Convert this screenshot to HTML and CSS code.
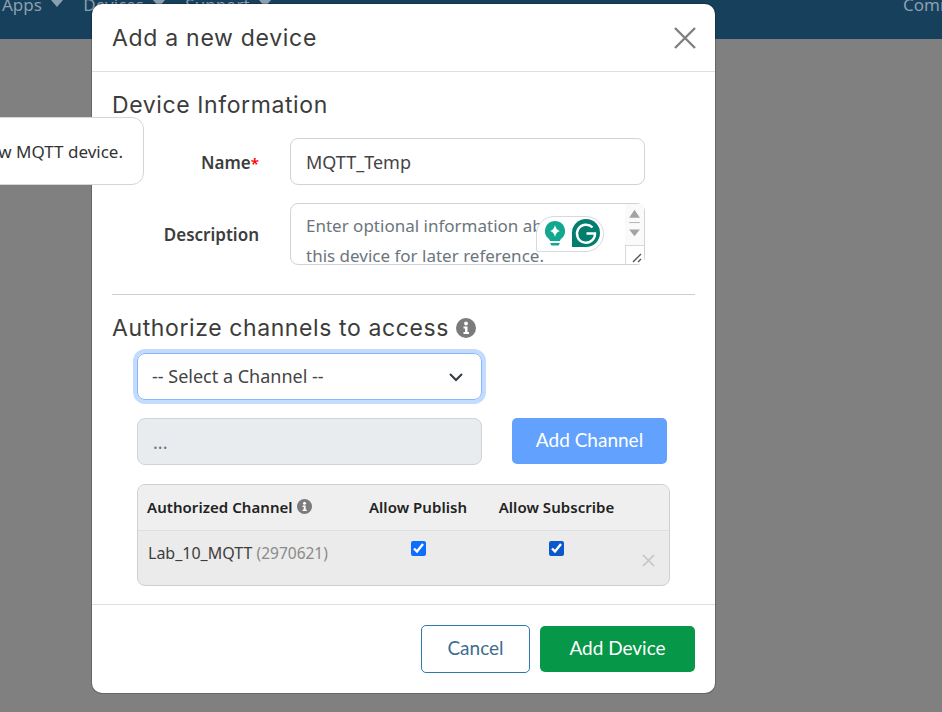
FILE: index.html
```html
<!DOCTYPE html>
<html lang="en">
<head>
    <meta charset="UTF-8">
    <title>Add a new device</title>
    <link rel="stylesheet" href="styles.css">
</head>
<body>
    <nav class="navbar">
        <span class="nav-item">Apps <i class="caret"></i></span>
        <span class="nav-item">Devices <i class="caret"></i></span>
        <span class="nav-item">Support <i class="caret"></i></span>
        <span class="nav-item nav-right">Commercial</span>
    </nav>

    <div class="popover">Add a new MQTT device.</div>

    <div class="modal">
        <div class="modal-header">
            <h4>Add a new device</h4>
            <svg class="close" width="24" height="24" viewBox="0 0 24 24"><path d="M2 2 L22 22 M22 2 L2 22" stroke="#808080" stroke-width="2.4" fill="none"/></svg>
        </div>

        <div class="modal-body">
            <h5 class="first">Device Information</h5>

            <div class="form-row name-row">
                <label>Name<span class="req">*</span></label>
                <input class="form-control" type="text" value="MQTT_Temp">
            </div>

            <div class="form-row desc-row">
                <label>Description</label>
                <div class="desc-box">
                    <textarea class="form-control" placeholder="Enter optional information about this device for later reference."></textarea>
                    <div class="scrollbar">
                        <svg width="19" height="42" viewBox="0 0 19 42"><path d="M4 14 L9.5 6 L15 14 Z" fill="#a3a3a3"/><path d="M4 19 H15" stroke="#b5b5b5"/><path d="M4 26 L15 26 L9.5 33 Z" fill="#a3a3a3"/></svg>
                        <div class="resizer">
                            <svg width="19" height="19" viewBox="0 0 19 19"><path d="M7 16 L15 8 M12 16 L15 13" stroke="#555" stroke-width="1.4"/></svg>
                        </div>
                    </div>
                    <div class="grammarly">
                        <svg width="24" height="26" viewBox="0 0 24 26"><path d="M12 1 A10 10 0 0 1 18 19 Q17 20 17 21 H7 Q7 20 6 19 A10 10 0 0 1 12 1 Z" fill="#11a88f"/><path d="M12 5 Q13 10 17 11 Q13 12 12 17 Q11 12 7 11 Q11 10 12 5 Z" fill="#fff"/><path d="M7 23 H17 L15.5 25.500 H8.500 Z" fill="#11a88f"/></svg>
                        <svg width="30" height="30" viewBox="0 0 30 30"><path d="M15 1 A14 14 0 0 1 15 29 H1 V15 A14 14 0 0 1 15 1 Z" fill="#027e6f"/><path d="M21.500 9.500 A9 9 0 1 0 24 15.500 H15.500" stroke="#fff" stroke-width="2.400" fill="none"/></svg>
                    </div>
                </div>
            </div>

            <hr class="divider">

            <h5 class="channels-title">Authorize channels to access
                <svg class="info" width="20" height="20" viewBox="0 0 20 20"><circle cx="10" cy="10" r="10" fill="#7b7b7b"/><circle cx="10" cy="5.500" r="1.900" fill="#fff"/><path d="M7.500 8.500 H11.500 V14 H13 V16 H7.500 V14 H9 V10.500 H7.500 Z" fill="#fff"/></svg>
            </h5>

            <div class="channels">
                <div class="select-box">
                    <span>-- Select a Channel --</span>
                    <svg width="16" height="16" viewBox="0 0 16 16"><path d="M2 5 L8 11 L14 5" stroke="#343a40" stroke-width="2" fill="none"/></svg>
                </div>

                <div class="add-row">
                    <input class="form-control disabled" type="text" value="..." disabled>
                    <button class="btn btn-blue">Add Channel</button>
                </div>

                <div class="table-wrap">
                    <table>
                        <thead>
                            <tr>
                                <th class="col-name">Authorized Channel
                                    <svg class="info-small" width="15" height="15" viewBox="0 0 20 20"><circle cx="10" cy="10" r="10" fill="#7b7b7b"/><circle cx="10" cy="5.500" r="2" fill="#fff"/><path d="M7.500 8.500 H11.500 V14 H13 V16 H7.500 V14 H9 V10.500 H7.500 Z" fill="#fff"/></svg>
                                </th>
                                <th class="col-pub">Allow Publish</th>
                                <th class="col-sub">Allow Subscribe</th>
                                <th class="col-del"></th>
                            </tr>
                        </thead>
                        <tbody>
                            <tr>
                                <td class="col-name">Lab_10_MQTT <span class="muted">(2970621)</span></td>
                                <td class="col-pub"><input type="checkbox" checked></td>
                                <td class="col-sub"><input class="focused" type="checkbox" checked></td>
                                <td class="col-del">
                                    <svg width="13" height="13" viewBox="0 0 13 13"><path d="M1 1 L12 12 M12 1 L1 12" stroke="#c4c4c4" stroke-width="1.600"/></svg>
                                </td>
                            </tr>
                        </tbody>
                    </table>
                </div>
            </div>
        </div>

        <div class="modal-footer">
            <button class="btn btn-cancel">Cancel</button>
            <button class="btn btn-green">Add Device</button>
        </div>
    </div>
</body>
</html>
```

FILE: styles.css
```css
* {
    box-sizing: border-box;
}

html, body {
    height: 100%;
}

body {
    margin: 0;
    background-color: #808080;
    font-family: "Noto Sans", sans-serif;
    color: #333;
    overflow: hidden;
    position: relative;
}

.navbar {
    background-color: #17405c;
    height: 39px;
    display: flex;
    align-items: flex-start;
    gap: 20px;
    padding-left: 2px;
    overflow: hidden;
}

.nav-item {
    margin-top: -7px;
    font-size: 17px;
    line-height: 24px;
    color: #8b9fae;
    white-space: nowrap;
}

.nav-right {
    margin-left: 612px;
}

.caret {
    display: inline-block;
    width: 0;
    height: 0;
    border-left: 6px solid transparent;
    border-right: 6px solid transparent;
    border-top: 7px solid #8b9fae;
    margin-left: 5px;
    vertical-align: 4px;
}

.modal {
    position: absolute;
    left: 92px;
    top: 4px;
    width: 623px;
    height: 689px;
    background-color: #fff;
    border-radius: 10px;
    box-shadow: 0 0 0 1px rgba(0, 0, 0, 0.2);
    display: flex;
    flex-direction: column;
}

.modal-header {
    height: 68px;
    flex: none;
    border-bottom: 1px solid #dfdfdf;
    display: flex;
    align-items: center;
    justify-content: space-between;
    padding: 0 18px 0 20px;
}

h4, h5 {
    margin: 0;
    font-family: Inter, sans-serif;
    font-weight: 400;
    color: #3c3c3c;
}

h4 {
    font-size: 23px;
    letter-spacing: 0.7px;
}

h5 {
    font-size: 23px;
    letter-spacing: 0.6px;
    line-height: 30px;
}

.modal-body {
    flex: 1;
    padding: 18px 20px 0;
}

.form-row {
    display: flex;
    align-items: center;
}

.form-row label {
    width: 147px;
    margin-right: 31px;
    text-align: right;
    font-size: 17px;
    font-weight: 600;
    color: #3d3d3d;
}

.req {
    color: #f00;
    font-size: 15px;
}

.form-control {
    border: 1px solid #ced4da;
    border-radius: 8px;
    font-family: "Noto Sans", sans-serif;
    font-size: 18px;
    color: #444;
    background-color: #fff;
    outline: none;
}

.name-row {
    margin-top: 18px;
}

.name-row label {
    padding-top: 2px;
}

.name-row .form-control {
    width: 355px;
    height: 47px;
    padding: 0 15px 0 15px;
}

.desc-row {
    margin-top: 18px;
}

.desc-box {
    position: relative;
    width: 355px;
    height: 62px;
}

.desc-box textarea {
    display: block;
    width: 100%;
    height: 100%;
    padding: 7px 60px 0 15px;
    font-size: 17px;
    line-height: 30px;
    resize: none;
    overflow: hidden;
}

.desc-box textarea::placeholder {
    color: #6c757d;
    opacity: 1;
}

.scrollbar {
    position: absolute;
    top: 1px;
    right: 1px;
    bottom: 1px;
    width: 19px;
    background-color: #fafafa;
    display: flex;
    flex-direction: column;
    justify-content: space-between;
}

.resizer {
    height: 19px;
    border-top: 1px solid #d8d8d8;
    border-left: 1px solid #d8d8d8;
    background-color: #fff;
}

.grammarly {
    position: absolute;
    left: 246px;
    top: 13px;
    width: 68px;
    height: 36px;
    background-color: #fff;
    border: 1px solid #d5d9e2;
    border-radius: 18px 18px 18px 2px;
    display: flex;
    align-items: center;
    gap: 4px;
    padding: 0 0 2px 6px;
}

.divider {
    border: 0;
    border-top: 1px solid #cfcfcf;
    margin: 29px 0 0;
}

.channels-title {
    margin-top: 18px;
    display: flex;
    align-items: center;
    gap: 7px;
}

.channels {
    padding-left: 25px;
    margin-top: 10px;
}

.select-box {
    width: 345px;
    height: 47px;
    border: 1px solid #86b7fe;
    border-radius: 8px;
    box-shadow: 0 0 0 4px #c2dbfe;
    display: flex;
    align-items: center;
    justify-content: space-between;
    padding: 0 17px 2px 14px;
    font-size: 18px;
    color: #444;
}

.select-box svg {
    margin-top: 2px;
}

.add-row {
    display: flex;
    align-items: flex-start;
    margin-top: 18px;
}

.form-control.disabled {
    width: 345px;
    height: 47px;
    padding: 0 15px;
    background-color: #e9ecef;
    color: #6c757d;
}

.btn {
    border: none;
    border-radius: 5px;
    font-family: Lato, sans-serif;
    font-size: 19px;
    height: 46px;
    padding: 0 0 4px;
}

.btn-blue {
    width: 155px;
    margin-left: 30px;
    background-color: #62a2fe;
    color: #fff;
}

.table-wrap {
    width: 533px;
    margin-top: 19px;
    border: 1px solid #cfcfcf;
    border-radius: 8px;
    overflow: hidden;
    background-color: #ebebeb;
}

table {
    width: 100%;
    border-collapse: collapse;
    table-layout: fixed;
}

th {
    height: 45px;
    background-color: #efefef;
    border-bottom: 1px solid #dcdfe5;
    padding-bottom: 1px;
    font-size: 15px;
    font-weight: 600;
    letter-spacing: 0.05px;
    color: #222;
    white-space: nowrap;
}

td {
    height: 55px;
    font-size: 16px;
    color: #3d3d3d;
    vertical-align: top;
    padding-top: 8px;
    white-space: nowrap;
}

th.col-name {
    padding-left: 9px;
}

.col-name {
    width: 221px;
    padding-left: 10px;
    text-align: left;
}

td.col-name {
    padding-top: 11px;
}

.col-pub {
    width: 129px;
    padding-right: 12px;
    text-align: center;
}

.col-sub {
    width: 137px;
    text-align: center;
}

td.col-del {
    padding-top: 19px;
    padding-right: 14px;
    text-align: right;
}

.muted {
    color: #8a8a8a;
    font-size: 15.5px;
}

.info-small {
    vertical-align: -1px;
}

input[type="checkbox"] {
    width: 15px;
    height: 15px;
    margin: 1px 0 0;
    accent-color: #0d6efd;
}

input[type="checkbox"].focused {
    accent-color: #0a58ca;
}

.modal-footer {
    height: 89px;
    flex: none;
    border-top: 1px solid #dfdfdf;
    display: flex;
    align-items: center;
    justify-content: flex-end;
    gap: 10px;
    padding-right: 20px;
}

.btn-cancel {
    width: 109px;
    height: 48px;
    background-color: #fff;
    border: 1px solid #2a7ab0;
    color: #3e6d8e;
}

.btn-green {
    width: 155px;
    background-color: #079748;
    color: #fff;
}

.popover {
    position: absolute;
    right: calc(100% - 144px);
    top: 117px;
    height: 68px;
    width: 240px;
    background-color: #fff;
    border: 1px solid #d5d5d5;
    border-radius: 12px;
    z-index: 2;
    display: flex;
    align-items: center;
    justify-content: flex-end;
    padding: 1px 20px 0 0;
    font-size: 17px;
    color: #333;
    white-space: nowrap;
}
```
